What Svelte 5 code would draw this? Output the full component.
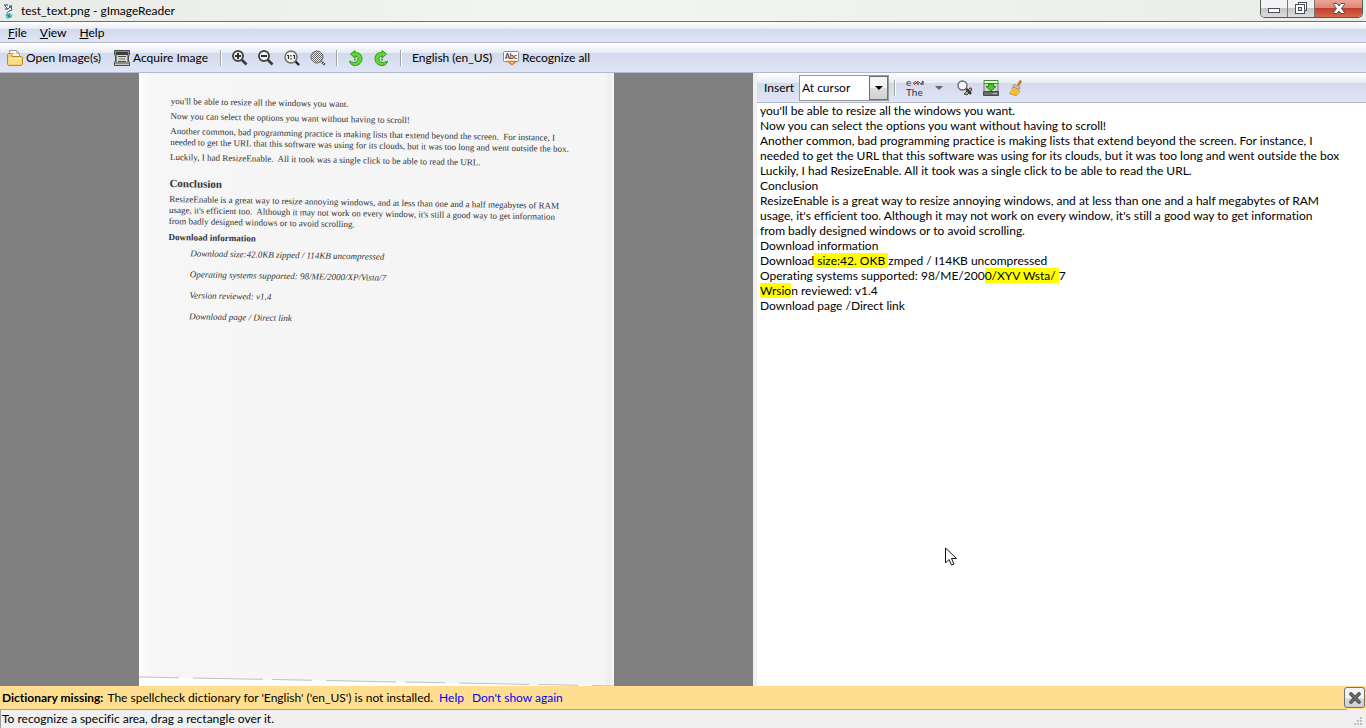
<script lang="ts">
	const menus = ['File', 'View', 'Help'];

	type Part = { text: string; marked?: boolean };

	const output: Part[][] = [
		[{ text: "you'll be able to resize all the windows you want." }],
		[{ text: 'Now you can select the options you want without having to scroll!' }],
		[{ text: 'Another common, bad programming practice is making lists that extend beyond the screen. For instance, I' }],
		[{ text: 'needed to get the URL that this software was using for its clouds, but it was too long and went outside the box' }],
		[{ text: 'Luckily, I had ResizeEnable. All it took was a single click to be able to read the URL.' }],
		[{ text: 'Conclusion' }],
		[{ text: 'ResizeEnable is a great way to resize annoying windows, and at less than one and a half megabytes of RAM' }],
		[{ text: "usage, it's efficient too. Although it may not work on every window, it's still a good way to get information" }],
		[{ text: 'from badly designed windows or to avoid scrolling.' }],
		[{ text: 'Download information' }],
		[{ text: 'Download' }, { text: ' size:42. OKB ', marked: true }, { text: 'zmped / I14KB uncompressed' }],
		[{ text: 'Operating systems supported: 98/ME/200' }, { text: '0/XYV Wsta/ ', marked: true }, { text: '7' }],
		[{ text: 'Wrsio', marked: true }, { text: 'n reviewed: v1.4' }],
		[{ text: 'Download page /Direct link' }]
	];

	let insertMode = $state('At cursor');
	let showInfo = $state(true);
</script>

<svelte:head>
	<title>test_text.png - gImageReader</title>
</svelte:head>

<div class="window">
	<header class="titlebar">
		<svg class="app-icon" width="14" height="16" viewBox="0 0 14 16">
			<path d="M2 1h4v2H2zM7 2h3v3H7zM3 5h3v2H3z" fill="#7d90ae" />
			<path d="M3 3l3 3 3-3 1 4-3 1-2 2" fill="none" stroke="#3f5878" />
			<path d="M3 12l3-2 5 2-2 3-4 1z" fill="#5fd0d0" />
			<path d="M4 11l5 3M8 10l-2 5" stroke="#1f808a" />
		</svg>
		<h1>test_text.png - gImageReader</h1>
		<div class="window-controls">
			<button class="control minimize" aria-label="Minimize">
				<svg width="14" height="8" viewBox="0 0 14 8">
					<rect x="1.5" y="3.5" width="11" height="4" fill="#fff" stroke="#4a4e5a" />
				</svg>
			</button>
			<button class="control restore" aria-label="Restore">
				<svg width="13" height="13" viewBox="0 0 13 13">
					<rect x="3.5" y=".5" width="8" height="8" fill="#fff" stroke="#4a4e5a" />
					<rect x=".5" y="2.5" width="9" height="9" fill="#fff" stroke="#4a4e5a" />
					<rect x="3.5" y="5.5" width="3" height="3" fill="#ddd" stroke="#4a4e5a" />
				</svg>
			</button>
			<button class="control close" aria-label="Close">
				<svg width="12" height="11" viewBox="0 0 12 11">
					<path d="M.5.5h3.500L6 3 8 .5h3.500v1L8.500 5.500l3 4v1H8L6 8l-2 2.500H.5v-1l3-4-3-4z" fill="#fff" stroke="#4a4a5a" />
				</svg>
			</button>
		</div>
	</header>

	<nav class="bar menubar">
		{#each menus as menu}
			<button><u>{menu[0]}</u>{menu.slice(1)}</button>
		{/each}
	</nav>

	<div class="bar toolbar">
		<button class="tool open">
			<svg width="16" height="16" viewBox="0 0 16 16">
				<path d="M2.500 8V.5h7l3 3V8" fill="#f8f8f6" stroke="#9a9a96" />
				<path d="M9.500.5v3h3M4.500 3.500h3" fill="none" stroke="#b4b4b0" />
				<path d="M.5 14V4.500l1-1H4l1 1.500v1.500h9.500l1 1V14l-1 1.500h-13z" fill="#f6d064" stroke="#c28e16" />
				<path d="M1.500 9h13v5h-13z" fill="#fade7c" />
				<path d="M1.500 8.500h13" stroke="#fff2bc" />
			</svg>
			Open Image(s)
		</button>
		<button class="tool acquire">
			<svg width="16" height="16" viewBox="0 0 16 16">
				<path d="M.5.5h15v4l-1 1.500v5l1 1.500v3H.5v-3l1-1.500V6l-1-1.500z" fill="#8c8c88" stroke="#494a46" />
				<path d="M2 2h12v3H2z" fill="#3c3d3a" />
				<path d="M3 5h10v7H3z" fill="#d9dad4" />
				<path d="M4 6.500h8M4 11.500h8" stroke="#4e4f4b" />
				<path d="M5 9h6" stroke="#6e6f6b" />
				<path d="M1 14.500h14" stroke="#c6c6c0" />
			</svg>
			Acquire Image
		</button>
		<span class="separator"></span>
		<button class="icon" aria-label="Zoom in">
			<svg width="16" height="16" viewBox="0 0 16 16">
				<path d="M9.500 9.500l5 5" stroke="#3b3d3b" stroke-width="2.600" />
				<circle cx="6" cy="6" r="5" fill="#f2f3f3" stroke="#464846" stroke-width="2" />
				<path d="M3 6h6M6 3v6" stroke="#2f312f" stroke-width="2" />
			</svg>
		</button>
		<button class="icon" aria-label="Zoom out">
			<svg width="16" height="16" viewBox="0 0 16 16">
				<path d="M9.500 9.500l5 5" stroke="#3b3d3b" stroke-width="2.600" />
				<circle cx="6" cy="6" r="5" fill="#f2f3f3" stroke="#464846" stroke-width="2" />
				<path d="M3 6h6" stroke="#2f312f" stroke-width="2" />
			</svg>
		</button>
		<button class="icon" aria-label="Normal size">
			<svg width="16" height="16" viewBox="0 0 16 16">
				<path d="M11 11l4 4" stroke="#222" stroke-width="2.400" />
				<circle cx="7" cy="7" r="6" fill="#f0f0ec" stroke="#6a6c6a" stroke-width="1.400" />
				<path d="M3 5.500h1.500V9M9 5.500h1.500V9M7 5v1.500M7 8v1.500" fill="none" stroke="#333" stroke-width="1.200" />
			</svg>
		</button>
		<button class="icon" aria-label="Best fit">
			<svg width="16" height="16" viewBox="0 0 16 16">
				<defs>
					<pattern id="checker" width="2" height="2" patternUnits="userSpaceOnUse">
						<path d="M0 0h1v1H0zM1 1h1v1H1z" fill="#666" />
					</pattern>
				</defs>
				<path d="M11 11l4 4" stroke="#222" stroke-width="2.400" stroke-dasharray="1 1" />
				<circle cx="7" cy="7" r="6" fill="#eee" stroke="#888" />
				<circle cx="7" cy="7" r="6.500" fill="url(#checker)" />
			</svg>
		</button>
		<span class="separator"></span>
		<button class="icon" aria-label="Rotate left">
			<svg width="16" height="16" viewBox="0 0 16 16">
				<path d="M2.500 4L7 .5v2c4-.5 7 2.500 7 6 0 4-3 7-7 7-3 0-5-1.500-5.500-4.500 3 2 8.500 2 8.500-2C10 7 8.500 6 7 6v2z" fill="#62d638" stroke="#2f9a18" />
				<circle cx="7" cy="9.500" r="1" fill="#2f9a18" />
			</svg>
		</button>
		<button class="icon" aria-label="Rotate right">
			<svg width="16" height="16" viewBox="0 0 16 16">
				<path d="M12.500 4L8 .5v2c-4-.5-7 2.500-7 6 0 4 3 7 7 7 3 0 5-1.500 5.500-4.500-3 2-8.500 2-8.500-2C5 7 6.500 6 8 6v2z" fill="#62d638" stroke="#2f9a18" />
				<circle cx="8" cy="9.500" r="1" fill="#2f9a18" />
			</svg>
		</button>
		<span class="separator"></span>
		<button class="tool language">English (en_US)</button>
		<button class="tool">
			<svg width="16" height="16" viewBox="0 0 16 16">
				<rect x=".5" y="1.5" width="15" height="10" rx="1" fill="#fdfdfd" stroke="#8b8b8b" />
				<text x="8" y="9" text-anchor="middle" font-size="7" font-weight="700" fill="#333">Abc</text>
				<path d="M5 11.500h8l-4 3z" fill="#fff" stroke="#e07b10" stroke-width="1.400" />
			</svg>
			Recognize all
		</button>
	</div>

	<main>
		<section class="viewer">
			<article class="paper">
				<div class="scan">
					<p>you'll be able to resize all the windows you want.</p>
					<p>Now you can select the options you want without having to scroll!</p>
					<p>
						Another common, bad programming practice is making lists that extend beyond the screen.&nbsp; For instance, I<br />
						needed to get the URL that this software was using for its clouds, but it was too long and went outside the box.
					</p>
					<p>Luckily, I had ResizeEnable.&nbsp; All it took was a single click to be able to read the URL.</p>
					<h2>Conclusion</h2>
					<p>
						ResizeEnable is a great way to resize annoying windows, and at less than one and a half megabytes of RAM<br />
						usage, it's efficient too.&nbsp; Although it may not work on every window, it's still a good way to get information<br />
						from badly designed windows or to avoid scrolling.
					</p>
					<h3>Download information</h3>
					<ul>
						<li>Download size:42.0KB zipped / 114KB uncompressed</li>
						<li>Operating systems supported: 98/ME/2000/XP/Vista/7</li>
						<li>Version reviewed: v1.4</li>
						<li>Download page / Direct link</li>
					</ul>
				</div>
				<svg class="edge" height="10" viewBox="0 0 474 10" preserveAspectRatio="none">
					<path d="M0 1L474 10H0z" fill="#fff" />
					<path d="M0 1L474 10" stroke="#c0c0c0" stroke-dasharray="40 14 70 9" />
				</svg>
			</article>
		</section>

		<section class="editor">
			<div class="bar toolbar output-bar">
				<label for="insert">Insert</label>
				<div class="combo">
					<select id="insert" bind:value={insertMode}>
						<option>At cursor</option>
						<option>Append</option>
						<option>Replace</option>
					</select>
					<span class="arrow"></span>
				</div>
				<span class="separator"></span>
				<button class="icon strip" aria-label="Strip line breaks">
					<svg width="20" height="22" viewBox="0 0 20 22">
						<text x="0" y="9" font-size="10" fill="#333">e</text>
						<path d="M7 6h2M15 8l2-4v4M12 4v4" fill="none" stroke="#333" />
						<path d="M8 8l4-4M9 4l3 4M13 5l3 3" stroke="#b33" />
						<text x="0" y="19" font-size="10" fill="#333">The</text>
					</svg>
				</button>
				<button class="icon drop" aria-label="Strip options">
					<svg width="8" height="4" viewBox="0 0 8 4"><path d="M0 0h8L4 4z" fill="#666" /></svg>
				</button>
				<button class="icon" aria-label="Find and replace">
					<svg width="16" height="16" viewBox="0 0 16 16">
						<path d="M7 14l6-6 2 2-5 5z" fill="#a5a5a5" stroke="#444" />
						<path d="M9 8.500l5 5.500" stroke="#333" stroke-width="2.400" />
						<circle cx="5.500" cy="5.500" r="4.500" fill="#f4f4f4" stroke="#6a6a6a" stroke-width="1.400" />
						<path d="M13 7.500l2 2" stroke="#c0392b" stroke-width="1.500" />
					</svg>
				</button>
				<button class="icon" aria-label="Save output">
					<svg width="16" height="16" viewBox="0 0 16 16">
						<path d="M1 4l1-3h12l1 3v11.500H1z" fill="#d4d5d2" stroke="#777" />
						<path d="M.5 11.500h15v4H.5z" fill="#6b6d6a" stroke="#4a4c49" />
						<path d="M1 .5h14v3H1z" fill="#fff" stroke="#2d9a1a" />
						<path d="M5.500 4h5v2.500h2.500L8 11 3 6.500h2.500z" fill="#49c82a" stroke="#238a12" />
						<path d="M10 13.500h4" stroke="#bbb" />
					</svg>
				</button>
				<button class="icon" aria-label="Clear output">
					<svg width="16" height="16" viewBox="0 0 16 16">
						<path d="M12 .5l-3 5" stroke="#c87a1c" stroke-width="2.600" />
						<path d="M5 4.500l6 3-1 2-6-3z" fill="#d7d7d7" stroke="#8c7b50" stroke-width=".8" />
						<path d="M4 7l6 2.500c1 3-1 5-3 6L.5 13.500C3 11.500 3 9 4 7z" fill="#f8c93c" stroke="#bd8412" stroke-width=".8" />
						<path d="M6 9l-1.500 4M8 10l-1.500 4" stroke="#dca426" stroke-width=".8" />
					</svg>
				</button>
			</div>
			<div class="output" role="textbox" aria-multiline="true" aria-label="Output" tabindex="0" contenteditable="true" spellcheck="false">
				{#each output as line}
					<div>{#each line as part}{#if part.marked}<mark>{part.text}</mark>{:else}{part.text}{/if}{/each}</div>
				{/each}
			</div>
		</section>
	</main>

	{#if showInfo}
		<aside class="info">
			<strong>Dictionary missing:</strong>
			<span>The spellcheck dictionary for 'English' ('en_US') is not installed.</span>
			<a href="#help">Help</a>
			<a href="#hide">Don't show again</a>
			<button aria-label="Close message" onclick={() => (showInfo = false)}>
				<svg width="12" height="12" viewBox="0 0 12 12">
					<path d="M2 2l8 8M10 2l-8 8" stroke="#4b4b4b" stroke-width="3.600" stroke-linecap="round" />
					<path d="M2 2l8 8M10 2l-8 8" stroke="#777" stroke-width="1.400" stroke-linecap="round" />
				</svg>
			</button>
		</aside>
	{/if}

	<footer>
		<span class="status">To recognize a specific area, drag a rectangle over it.</span>
		<svg class="grip" width="8" height="8" viewBox="0 0 8 8">
			<path d="M6 0h2v2H6zM3 3h2v2H3zM6 3h2v2H6zM0 6h2v2H0zM3 6h2v2H3zM6 6h2v2H6z" fill="#bfbfbf" />
		</svg>
	</footer>

	<svg class="pointer" width="13" height="20" viewBox="0 0 13 20">
		<path d="M.5 1v15l3.500-3.500L6.500 18l2.500-1-2.500-5.500h5z" fill="#fff" stroke="#111" />
	</svg>
</div>

<style>
	:global(body) {
		margin: 0;
	}

	.window {
		display: flex;
		flex-direction: column;
		height: 100vh;
		overflow: hidden;
		position: relative;
		background: #f0f0f0;
		color: #000;
		font: 12px/15px Lato, 'Open Sans', sans-serif;
		font-variant-ligatures: none;
		white-space: nowrap;
	}

	button {
		border: 0;
		padding: 0;
		background: none;
		color: inherit;
		font: inherit;
		font-variant-ligatures: none;
	}

	svg {
		display: block;
		flex: none;
	}

	.titlebar {
		display: flex;
		align-items: center;
		height: 21px;
		padding: 0 3px 0 2px;
		gap: 5px;
		border-bottom: 1px solid #6d7070;
		background: linear-gradient(90deg, #e8ebe6, #f3f5f1 40%, #eaede7);
	}

	h1 {
		margin: 0;
		flex: 1;
		font-size: 12px;
		font-weight: 400;
	}

	.window-controls {
		display: flex;
		align-self: flex-start;
		height: 17px;
		border: 1px solid #55585a;
		border-top: 0;
		border-radius: 0 0 5px 5px;
		overflow: hidden;
	}

	.control {
		display: flex;
		align-items: center;
		justify-content: center;
		width: 27px;
		border-right: 1px solid #777;
		background: linear-gradient(#f2f3f2 50%, #c4c7c4 50%, #dcdedb);
	}

	.control.close {
		width: 47px;
		border-right: 0;
		background: linear-gradient(#eba597, #dc8473 50%, #c2402a 50%, #d4674f);
	}

	.bar {
		display: flex;
		align-items: center;
		border-bottom: 1px solid #b1b8d0;
		background: linear-gradient(#fff, #e6ebf5 33%, #d2d9ec 34%, #e0e6f6);
	}

	.menubar {
		height: 20px;
		padding-left: 8px;
		gap: 13px;
	}

	.toolbar {
		height: 29px;
		padding-left: 7px;
	}

	.tool {
		display: flex;
		align-items: center;
		gap: 3px;
	}

	.open {
		width: 107px;
	}

	.acquire {
		width: 106px;
	}

	.language {
		width: 91px;
	}

	.icon {
		display: flex;
		align-items: center;
		width: 26px;
	}

	.separator {
		width: 1px;
		height: 16px;
		margin-right: 10px;
		border-right: 1px solid #fff;
		background: #a5a5a5;
	}

	main {
		display: grid;
		grid-template-columns: 753fr 609fr;
		column-gap: 4px;
		flex: 1;
		min-height: 0;
	}

	.viewer {
		display: flex;
		justify-content: center;
		overflow: hidden;
		background: #808080;
	}

	.paper {
		display: flex;
		flex-direction: column;
		justify-content: space-between;
		width: 63%;
		background: linear-gradient(90deg, #fdfdfd, #f6f6f6 3%, #f5f5f5 98%, #ededed 99%, #f8f8f8);
	}

	.edge {
		width: 100%;
	}

	.scan {
		padding: 23px 0 0 32px;
		transform: rotate(1deg);
		transform-origin: 32px 23px;
		color: #333;
		font: 9px/11px 'Liberation Serif', serif;
	}

	.scan p {
		margin: 0 0 4px;
	}

	.scan h2 {
		margin: 15px 0 5px;
		font-size: 11px;
	}

	.scan h3 {
		margin: 5px 0 0;
		font-size: 9px;
	}

	.scan ul {
		margin: 5px 0 0;
		padding-left: 22px;
		list-style: none;
		font-style: italic;
	}

	.scan li {
		margin-bottom: 10px;
	}

	.editor {
		display: flex;
		flex-direction: column;
		min-width: 0;
		background: #fff;
	}

	label {
		width: 35px;
	}

	.combo {
		position: relative;
		margin-right: 5px;
	}

	select {
		display: block;
		width: 90px;
		height: 26px;
		padding: 0 0 0 2px;
		border: 1px solid #9a9a9a;
		border-radius: 0;
		appearance: none;
		background: #fff;
		color: inherit;
		font: inherit;
	}

	.arrow {
		display: flex;
		align-items: center;
		justify-content: center;
		position: absolute;
		inset: 1px 1px 1px auto;
		width: 17px;
		border: 1px solid #707070;
		background: linear-gradient(#f4f4f4 50%, #dedede 50%, #d0d0d0);
		pointer-events: none;
	}

	.arrow::after {
		content: '';
		border: 4px solid transparent;
		border-top-color: #000;
		border-bottom: 0;
	}

	.icon.strip {
		width: 29px;
	}

	.icon.drop {
		width: 22px;
	}

	.output {
		flex: 1;
		padding: 0 3px;
		overflow: hidden;
		outline: 0;
	}

	mark {
		background: #ff0;
		color: inherit;
	}

	.info {
		display: flex;
		align-items: center;
		height: 23px;
		padding: 0 1px 0 2px;
		background: #ffdf8f;
	}

	.info span {
		margin: 0 6px 0 4px;
	}

	.info a {
		margin-right: 8px;
		color: #00f;
		text-decoration: none;
	}

	.info button {
		display: flex;
		align-items: center;
		justify-content: center;
		width: 21px;
		height: 21px;
		margin-left: auto;
		border: 1px solid #707070;
		border-radius: 3px;
		background: linear-gradient(#f3f3f3 50%, #dcdcdc 50%, #d0d0d0);
	}

	footer {
		display: flex;
		height: 19px;
	}

	.status {
		flex: 1;
		padding: 1px;
		border-top: 1px solid #a0a0a0;
		border-left: 1px solid #a0a0a0;
	}

	.grip {
		align-self: flex-end;
		margin: 0 4px 3px 7px;
	}

	.pointer {
		position: absolute;
		left: 945px;
		top: 547px;
		pointer-events: none;
	}
</style>
